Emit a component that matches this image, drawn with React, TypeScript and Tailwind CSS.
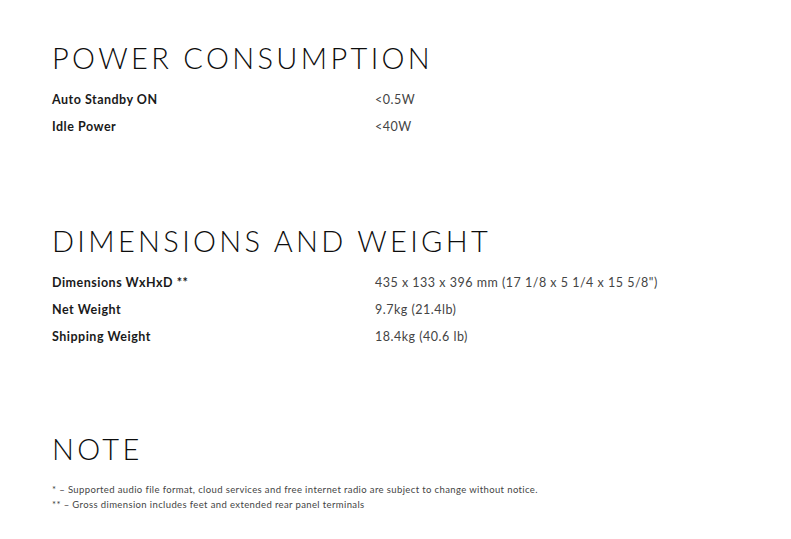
const specs = [
  {
    title: "POWER CONSUMPTION",
    rows: [
      ["Auto Standby ON", "<0.5W"],
      ["Idle Power", "<40W"],
    ],
  },
  {
    title: "DIMENSIONS AND WEIGHT",
    rows: [
      ["Dimensions WxHxD **", "435 x 133 x 396 mm (17 1/8 x 5 1/4 x 15 5/8\")"],
      ["Net Weight", "9.7kg (21.4lb)"],
      ["Shipping Weight", "18.4kg (40.6 lb)"],
    ],
  },
];

const notes = [
  "* – Supported audio file format, cloud services and free internet radio are subject to change without notice.",
  "** – Gross dimension includes feet and extended rear panel terminals",
];

const SpecSection = ({ title, rows, gap }: { title: string; rows: string[][]; gap: string }) => (
  <section className={gap}>
    <h2 className="text-[29px] leading-[36px] font-light tracking-[0.115em] text-[#0d0d0d]">
      {title}
    </h2>
    <div className="mt-[11px]">
      {rows.map(([label, value]) => (
        <div key={label} className="grid grid-cols-[323px_1fr] h-[27px] items-center text-[12.5px]">
          <span className="font-bold text-[#1a1a1a] tracking-[0.04em]">{label}</span>
          <span className="text-[#444] tracking-[0.04em]">{value}</span>
        </div>
      ))}
    </div>
  </section>
);

export default function App() {
  return (
    <div
      className="w-[791px] h-[539px] bg-white px-[52px] pt-[40px]"
      style={{ fontFamily: "Lato, 'Open Sans', sans-serif" }}
    >
      <SpecSection title={specs[0].title} rows={specs[0].rows} gap="mb-[82px]" />
      <SpecSection title={specs[1].title} rows={specs[1].rows} gap="mb-[80px]" />
      <section>
        <h2 className="text-[29px] leading-[36px] font-light tracking-[0.115em] text-[#0d0d0d]">
          NOTE
        </h2>
        <div className="mt-[17px] text-[9.5px] text-[#444] tracking-[0.04em] space-y-[4px]">
          {notes.map((n) => (
            <p key={n} className="leading-[11px]">{n}</p>
          ))}
        </div>
      </section>
    </div>
  );
}
